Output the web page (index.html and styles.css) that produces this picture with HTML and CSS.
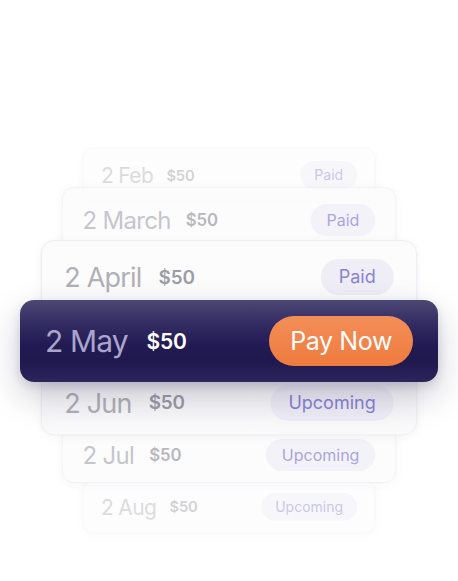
FILE: index.html
```html
<!DOCTYPE html>
<html lang="en">
<head>
<meta charset="utf-8">
<title>Payments</title>
<link rel="stylesheet" href="styles.css">
</head>
<body>
<div class="stack">
  <div class="card card-feb">
    <span class="date">2 Feb</span><span class="amount">$50</span><span class="badge">Paid</span>
  </div>
  <div class="card card-mar">
    <span class="date">2 March</span><span class="amount">$50</span><span class="badge">Paid</span>
  </div>
  <div class="card card-apr">
    <span class="date">2 April</span><span class="amount">$50</span><span class="badge">Paid</span>
  </div>
  <div class="card card-may">
    <span class="date">2 May</span><span class="amount">$50</span><span class="pay">Pay Now</span>
  </div>
  <div class="card card-jun">
    <span class="date">2 Jun</span><span class="amount">$50</span><span class="badge">Upcoming</span>
  </div>
  <div class="card card-jul">
    <span class="date">2 Jul</span><span class="amount">$50</span><span class="badge">Upcoming</span>
  </div>
  <div class="card card-aug">
    <span class="date">2 Aug</span><span class="amount">$50</span><span class="badge">Upcoming</span>
  </div>
</div>
</body>
</html>
```
FILE: styles.css
```css
html, body {
  margin: 0;
  padding: 0;
  background: #ffffff;
}
body {
  width: 458px;
  height: 581px;
  overflow: hidden;
  font-family: Inter, "Liberation Sans", sans-serif;
}
.stack {
  display: flex;
  flex-direction: column;
  align-items: center;
  padding-top: 136px;
}
.card {
  position: relative;
  box-sizing: border-box;
  width: 418px;
  height: 82px;
  flex: none;
  display: flex;
  align-items: center;
  gap: 19px;
  padding: 0 25px;
  border-radius: 15px;
  background: #fcfcfd;
  border: 1px solid #ebebef;
  box-shadow: 0 2px 10px rgba(30, 30, 60, 0.04);
  transform-origin: center center;
}
.date {
  font-size: 30px;
  font-weight: 400;
  color: #b1b0b9;
  letter-spacing: -0.9px;
}
.amount {
  font-size: 21px;
  font-weight: 600;
  color: #9d9ca6;
  letter-spacing: -0.2px;
}
.badge {
  margin-left: auto;
  height: 40px;
  display: flex;
  align-items: center;
  padding: 0 20px;
  border-radius: 20px;
  background: #efeef7;
  color: #8a83d2;
  font-size: 20px;
  font-weight: 400;
}
.card-feb {
  height: 78px;
  transform: scale(0.7);
  z-index: 1;
  opacity: 0.45;
}
.card-mar {
  margin-top: -35.5px;
  transform: scale(0.8);
  z-index: 2;
  opacity: 0.72;
}
.card-apr {
  margin-top: -25px;
  transform: scale(0.9);
  z-index: 3;
}
.card-may {
  margin-top: -17.5px;
  z-index: 4;
  border: none;
  border-radius: 14px;
  background: linear-gradient(180deg, #4c4774 0%, #332d64 28%, #221b53 55%, #1f1950 75%, #2b255b 100%);
  box-shadow: 0 14px 34px rgba(25, 20, 60, 0.22), 0 4px 10px rgba(25, 20, 60, 0.12);
}
.card-may .date {
  color: #a9a5cb;
}
.card-may .amount {
  color: #ffffff;
}
.pay {
  margin-left: auto;
  height: 50px;
  display: flex;
  align-items: center;
  padding: 0 21px;
  border-radius: 25px;
  background: linear-gradient(180deg, #f38e58 0%, #ef7b3e 100%);
  color: #ffffff;
  font-size: 25px;
  font-weight: 400;
  letter-spacing: -0.4px;
}
.card-jun {
  height: 73px;
  margin-top: -16.5px;
  transform: scale(0.9);
  z-index: 3;
  background: linear-gradient(180deg, #efeff2 0%, #f8f8fa 40%, #fafafb 100%);
}
.card-jul {
  height: 71px;
  margin-top: -19.5px;
  transform: scale(0.8);
  z-index: 2;
  opacity: 0.72;
}
.card-aug {
  height: 77px;
  margin-top: -22.5px;
  transform: scale(0.7);
  z-index: 1;
  opacity: 0.45;
}
```
